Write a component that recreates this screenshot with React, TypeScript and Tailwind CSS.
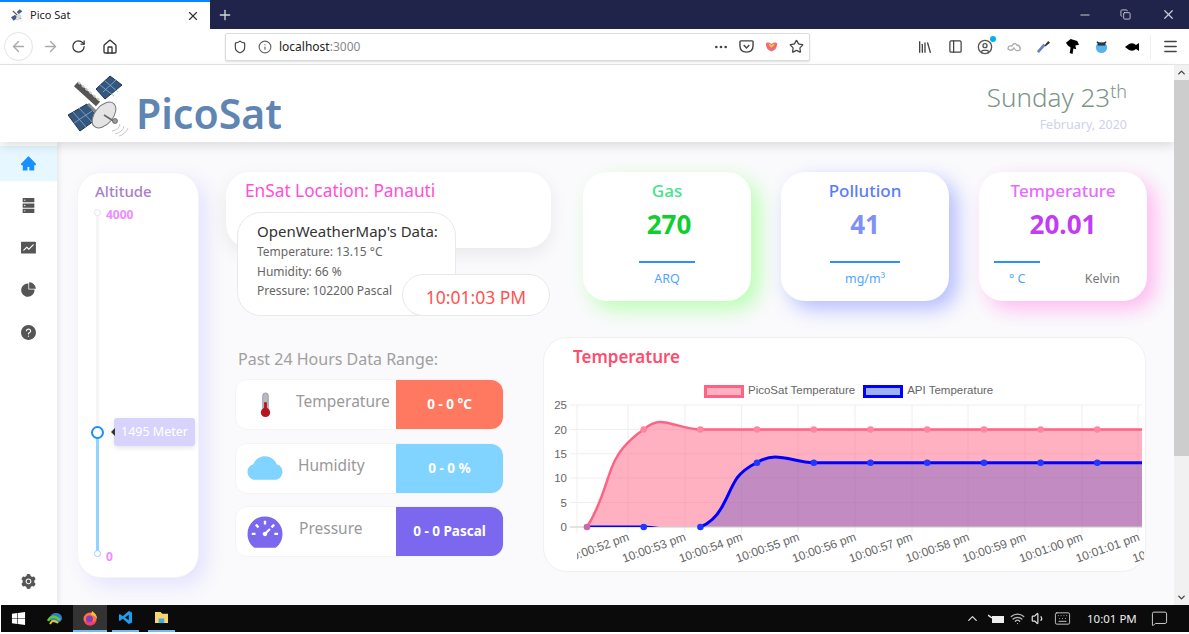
import {
  ArrowLeft,
  ArrowRight,
  RotateCw,
  Home,
  Shield,
  Info,
  MoreHorizontal,
  Star,
  Library,
  PanelLeft,
  CircleUser,
  Menu,
  Plus,
  X,
  Minus,
  Copy,
  ChevronUp,
  ChevronDown,
  Wifi,
  Volume1,
  Keyboard,
  MessageSquare,
} from "lucide-react";
import {
  AiFillHome,
  AiFillDatabase,
  AiFillFund,
  AiFillPieChart,
  AiFillQuestionCircle,
  AiFillSetting,
  AiFillCloud,
  AiFillDashboard,
} from "react-icons/ai";
import { FaWindows } from "react-icons/fa";

function Satellite({ className }: { className?: string }) {
  return (
    <svg viewBox="8 6 62 64" className={className}>
      <polygon points="36,21 50,8 62,17 45,31" fill="#33577f" stroke="#1d3550" strokeWidth="1" />
      <path d="M40,17 L54,28 M45,13 L58,24 M43,24 L56,12" stroke="#8db0d0" strokeWidth="0.8" />
      <polygon points="8,47 27,36 38,50 20,63" fill="#33577f" stroke="#1d3550" strokeWidth="1" />
      <path d="M13,44 L26,59 M19,40 L32,54 M14,55 L32,43" stroke="#8db0d0" strokeWidth="0.8" />
      <path d="M16,16 L38,36" stroke="#555" strokeWidth="6" />
      <path d="M18,14 L40,33" stroke="#c9c9c9" strokeWidth="2" strokeDasharray="3 2" />
      <path d="M28,36 L36,44" stroke="#888" strokeWidth="3" />
      <ellipse cx="44" cy="47" rx="9" ry="15" transform="rotate(40 44 47)" fill="#e4e4e4" stroke="#777" strokeWidth="1" />
      <path d="M44,47 L55,54" stroke="#666" strokeWidth="1.5" />
      <circle cx="55" cy="53" r="2.5" fill="#9a9a9a" stroke="#555" strokeWidth="0.7" />
      <path d="M52,63 Q59,62 60,56 M55,66 Q63,64 64,58 M59,68 Q66,66 68,60" fill="none" stroke="#bbb" strokeWidth="0.8" />
    </svg>
  );
}

function BrowserBar() {
  return (
    <>
      <div className="h-[29px] bg-[#20234a] flex items-stretch">
        <div className="w-[210px] bg-white border-t-2 border-[#0a84ff] flex items-center pl-[11px] pr-[10px]">
          <Satellite className="w-[13px] h-[13px]" />
          <span className="ml-[6px] text-[11px] text-[#222] flex-1">Pico Sat</span>
          <X className="w-[14px] h-[14px] text-[#333]" />
        </div>
        <div className="w-[30px] flex items-center justify-center">
          <Plus className="w-[16px] h-[16px] text-[#d5d6df]" />
        </div>
        <div className="flex-1" />
        <div className="flex items-center pr-[13px] text-[#c9cad6]">
          <Minus className="w-[14px] h-[14px]" />
          <Copy className="ml-[28px] w-[11px] h-[11px]" />
          <X className="ml-[30px] w-[15px] h-[15px]" />
        </div>
      </div>
      <div className="h-[36px] bg-white border-b border-[#e6e6e6] flex items-center relative">
        <div className="ml-[4px] w-[29px] h-[29px] rounded-full border border-[#e3e3e3] flex items-center justify-center">
          <ArrowLeft className="w-[17px] h-[17px] text-[#aaa]" />
        </div>
        <ArrowRight className="ml-[9px] w-[17px] h-[17px] text-[#aaa]" />
        <RotateCw className="ml-[12px] w-[15px] h-[15px] text-[#333]" />
        <Home className="ml-[16px] w-[16px] h-[16px] text-[#333]" />
        <div className="ml-[107px] w-[585px] h-[28px] bg-white border border-[#dcdcdc] rounded-[2px] shadow-[0_1px_2px_rgba(0,0,0,0.12)] flex items-center pl-[7px] pr-[5px]">
          <Shield className="w-[14px] h-[14px] text-[#444]" />
          <Info className="ml-[11px] w-[14px] h-[14px] text-[#666]" />
          <span className="ml-[7px] text-[12px] text-[#222]">
            localhost<span className="text-[#888]">:3000</span>
          </span>
          <div className="flex-1" />
          <MoreHorizontal className="w-[16px] h-[16px] text-[#444]" />
          <svg viewBox="0 0 16 16" className="ml-[10px] w-[15px] h-[15px]">
            <path d="M2,2 H14 Q15,2 15,3 V7 Q15,14 8,14 Q1,14 1,7 V3 Q1,2 2,2 Z M5,6.5 L8,9.5 L11,6.5" fill="none" stroke="#444" strokeWidth="1.5" />
          </svg>
          <svg viewBox="0 0 16 16" className="ml-[11px] w-[13px] h-[13px]">
            <path d="M1,4 Q4,2 8,5 Q12,2 15,4 Q15,12 8,14 Q1,12 1,4 Z" fill="#ee6a78" />
            <path d="M5,5 L8,8 L11,5" fill="none" stroke="#ffc23d" strokeWidth="2" />
          </svg>
          <Star className="ml-[11px] w-[15px] h-[15px] text-[#444]" />
        </div>
        <div className="absolute left-[917px] top-0 h-full flex items-center">
          <Library className="w-[16px] h-[16px] text-[#444]" />
          <PanelLeft className="ml-[15px] w-[15px] h-[15px] text-[#444]" />
          <div className="relative ml-[14px]">
            <CircleUser className="w-[16px] h-[16px] text-[#555]" />
            <div className="absolute -top-[3px] -right-[3px] w-[6px] h-[6px] rounded-full bg-[#00b0f0]" />
          </div>
          <svg viewBox="0 0 16 12" className="ml-[13px] w-[16px] h-[12px]">
            <path d="M2,8 Q2,4 6,5 Q8,1 11,4 Q15,5 14,9 Q10,11 8,7 Q5,11 2,8 Z" fill="none" stroke="#aaa" strokeWidth="1.3" />
          </svg>
          <svg viewBox="0 0 16 16" className="ml-[14px] w-[15px] h-[15px]">
            <path d="M2,14 L9,6" stroke="#6a7fc4" strokeWidth="3" />
            <path d="M9,7 L13,2 L15,4 L10,8 Z" fill="#333" />
          </svg>
          <svg viewBox="0 0 16 16" className="ml-[14px] w-[15px] h-[15px]">
            <path d="M1,4 L6,0 L13,2 L15,6 L11,7 L12,11 L9,10 L8,16 L5,15 L6,9 L3,7 Z" fill="#000" />
          </svg>
          <svg viewBox="0 0 16 16" className="ml-[14px] w-[15px] h-[15px]">
            <ellipse cx="8" cy="9" rx="6" ry="6" fill="#55b5e8" />
            <path d="M3,3 L6,5 M13,3 L10,5" stroke="#333" strokeWidth="1.5" />
            <rect x="4" y="4" width="8" height="3" fill="#333" />
          </svg>
          <svg viewBox="0 0 16 12" className="ml-[15px] w-[16px] h-[12px]">
            <path d="M1,6 L5,3 Q9,1 12,4 L15,2 V10 L12,8 Q9,11 5,9 Z" fill="#000" />
          </svg>
          <div className="ml-[10px] h-[24px] border-l border-[#eee]" />
          <Menu className="ml-[11px] w-[17px] h-[17px] text-[#444]" />
        </div>
      </div>
    </>
  );
}

function SideNav() {
  const items = [AiFillDatabase, AiFillFund, AiFillPieChart, AiFillQuestionCircle];
  return (
    <aside className="w-[57px] shrink-0 bg-white shadow-[2px_0_5px_rgba(0,0,0,0.08)] flex flex-col pt-[4px] pb-[15px] z-10">
      <div className="h-[35px] bg-[#e6f7ff] flex items-center justify-center">
        <AiFillHome className="w-[17px] h-[17px] text-[#1890ff]" />
      </div>
      <div className="mt-[3px] flex flex-col">
        {items.map((Icon, i) => (
          <div key={i} className="h-[42.3px] flex items-center justify-center">
            <Icon className="w-[17px] h-[17px] text-[#555]" />
          </div>
        ))}
      </div>
      <div className="mt-auto flex justify-center">
        <AiFillSetting className="w-[17px] h-[17px] text-[#555]" />
      </div>
    </aside>
  );
}

function AltitudeCard() {
  return (
    <div className="relative mt-[30px] ml-[20px] w-[122px] h-[406px] shrink-0 bg-white rounded-[24px] border border-[#f3f3f8] shadow-[8px_8px_20px_#e4e2ff]">
      <p className="pl-[17px] pt-[7px] text-[15px] font-medium text-[#a67fc9]">Altitude</p>
      <div className="absolute left-[18px] top-[40px] w-[3px] h-[340px] bg-[#f5f5f5]" />
      <div className="absolute left-[18px] top-[258px] w-[3px] h-[122px] bg-[#91d5ff]" />
      <div className="absolute left-[16px] top-[36px] w-[7px] h-[7px] rounded-full bg-white border border-[#e5e5e5]" />
      <div className="absolute left-[16px] top-[377px] w-[7px] h-[7px] rounded-full bg-white border border-[#91d5ff]" />
      <div className="absolute left-[13px] top-[253px] w-[13px] h-[13px] rounded-full bg-white border-2 border-[#1890ff]" />
      <span className="absolute left-[28px] top-[33px] text-[12px] font-bold text-[#ee8cff]">4000</span>
      <span className="absolute left-[28px] top-[375px] text-[12px] font-bold text-[#ee8cff]">0</span>
      <div className="absolute left-[36px] top-[245px] w-[81px] h-[28px] bg-[#d7d3fc] rounded-[3px] shadow-[0_2px_5px_rgba(0,0,0,0.1)] flex items-center justify-center text-[12.5px] text-white">
        1495 Meter
      </div>
      <div className="absolute left-[33px] top-[255px] w-0 h-0 border-y-[4px] border-y-transparent border-r-[4px] border-r-[#333]" />
    </div>
  );
}

function LocationBlock() {
  return (
    <div className="relative w-[325px] h-[145px] shrink-0">
      <div className="h-[76px] bg-white rounded-[24px] shadow-[0_6px_18px_rgba(0,0,0,0.07)] pl-[19px] pt-[6px] text-[17.25px] text-[#ff4fd8]">
        EnSat Location: Panauti
      </div>
      <div className="absolute left-[11px] top-[40px] w-[219px] h-[104px] bg-white rounded-[24px] border border-[#e9e9e9] pl-[19px] pt-[7px]">
        <p className="text-[15px] leading-[22px] text-[#333]">OpenWeatherMap's Data:</p>
        <p className="text-[12px] leading-[19.5px] text-[#666]">Temperature: 13.15 °C</p>
        <p className="text-[12px] leading-[19.5px] text-[#666]">Humidity: 66 %</p>
        <p className="text-[12px] leading-[19.5px] text-[#666]">Pressure: 102200 Pascal</p>
      </div>
      <div className="absolute left-[176px] top-[102px] w-[148px] h-[42px] bg-white rounded-full border border-[#e9e9e9] pt-[9px] text-center text-[17.5px] text-[#ff5252]">
        10:01:03 PM
      </div>
    </div>
  );
}

function StatCard({
  title,
  value,
  titleColor,
  valueColor,
  shadow,
  children,
}: {
  title: string;
  value: string;
  titleColor: string;
  valueColor: string;
  shadow: string;
  children: React.ReactNode;
}) {
  return (
    <div className={`w-[168px] h-[129px] shrink-0 bg-white rounded-[24px] flex flex-col items-center pt-[7px] ${shadow}`}>
      <p className={`text-[17px] leading-[24px] font-medium ${titleColor}`}>{title}</p>
      <p className={`mt-[5px] text-[26px] leading-[32px] font-bold ${valueColor}`}>{value}</p>
      {children}
    </div>
  );
}

function RangeRow({
  icon,
  label,
  value,
  labelClass,
  valueClass,
}: {
  icon: React.ReactNode;
  label: string;
  value: string;
  labelClass: string;
  valueClass: string;
}) {
  return (
    <div className="h-[51px] bg-white rounded-[12px] border border-[#f4f4f4] flex items-center">
      <div className="w-[58px] shrink-0 flex justify-center">{icon}</div>
      <span className={`flex-1 text-[15.5px] text-[#999] -mt-[5px] ${labelClass}`}>{label}</span>
      <div className={`w-[107px] h-full rounded-r-[12px] flex items-center justify-center text-[13.5px] font-bold text-white ${valueClass}`}>
        {value}
      </div>
    </div>
  );
}

function TemperatureChart() {
  const points = [587, 643.7, 700.4, 757, 813.8, 870.5, 927.2, 984, 1040.6, 1097.3];
  const grid = [577, 628, 685, 741.5, 798, 855, 912, 968, 1025, 1082, 1138];
  const ticks = [
    { y: 405, l: "25" },
    { y: 429.5, l: "20" },
    { y: 453.8, l: "15" },
    { y: 478, l: "10" },
    { y: 502.5, l: "5" },
    { y: 527, l: "0" },
  ];
  const times = [
    "10:00:52 pm",
    "10:00:53 pm",
    "10:00:54 pm",
    "10:00:55 pm",
    "10:00:56 pm",
    "10:00:57 pm",
    "10:00:58 pm",
    "10:00:59 pm",
    "10:01:00 pm",
    "10:01:01 pm",
    "10:01:02 pm",
  ];
  const pinkLine =
    "M587,527 C598,510 604,490 608,478 C612,465 617,455 623,448 C629,441 637,434 643.7,429.5 C650,424 655,422 660,422 C672,422 685,429.5 700.4,429.5 L1142,429.5";
  const blueLine =
    "M700.4,527 C710,523 718,515 723,505 C729,494 731,487 737,478 C743,470 750,466 757,462.5 C763,459 769,457 775,457 C788,457 800,462.7 813.8,462.7 L1142,462.7";
  return (
    <svg viewBox="544 395 601 172" className="block w-[601px] h-[172px] -mt-[3px]" style={{ fontFamily: "'Liberation Sans', sans-serif" }}>
      <defs>
        <clipPath id="plot">
          <rect x="577" y="405" width="565" height="122" />
        </clipPath>
        <clipPath id="labels">
          <rect x="577" y="527" width="567" height="40" />
        </clipPath>
      </defs>
      {ticks.map((t) => (
        <g key={t.l}>
          <line x1="570" x2="1142" y1={t.y} y2={t.y} stroke="#eeeeee" strokeWidth="1" />
          <text x="567" y={t.y + 4} textAnchor="end" fontSize="11.5" fill="#666">
            {t.l}
          </text>
        </g>
      ))}
      {grid.map((x) => (
        <line key={x} x1={x} x2={x} y1="405" y2="533" stroke="#eeeeee" strokeWidth="1" />
      ))}
      <g clipPath="url(#plot)">
        <path d={`${pinkLine} L1142,527 Z`} fill="rgba(255,99,132,0.5)" />
        <path d={`${blueLine} L1142,527 Z`} fill="rgba(102,82,193,0.4)" />
      </g>
      <line x1="570" x2="1142" y1="527" y2="527" stroke="#cfcfcf" strokeWidth="1" />
      <path d={pinkLine} fill="none" stroke="#ff6384" strokeWidth="2.5" />
      {points.slice(1).map((x) => (
        <circle key={x} cx={x} cy="429.5" r="3.3" fill="#ff86a0" />
      ))}
      <path d="M587,527 L643.7,527 C652,527 658,528 666,530" fill="none" stroke="#0000ff" strokeWidth="3" clipPath="url(#plot)" />
      <path d={blueLine} fill="none" stroke="#0000ff" strokeWidth="3" />
      <circle cx="587" cy="527" r="3.3" fill="#c56aa8" />
      {[643.7, 700.4].map((x) => (
        <circle key={x} cx={x} cy="527" r="3.3" fill="#2038ff" />
      ))}
      {points.slice(3).map((x) => (
        <circle key={x} cx={x} cy="462.7" r="3.3" fill="#2038ff" />
      ))}
      <g clipPath="url(#labels)">
        {times.map((t, i) => {
          const x = 630 + 56.7 * i;
          return (
            <text key={t} x={x} y="540" textAnchor="end" fontSize="12" fill="#666" transform={`rotate(-20 ${x} 540)`}>
              {t}
            </text>
          );
        })}
      </g>
    </svg>
  );
}

function Taskbar() {
  return (
    <div className="h-[29px] shrink-0 bg-white pl-px pb-[2px]">
      <div className="h-full bg-[#0b0b0b] flex items-stretch relative">
        <div className="w-[35px] flex items-center justify-center">
          <FaWindows className="w-[15px] h-[15px] text-white" />
        </div>
        <div className="w-[37px] flex items-center justify-center">
          <svg viewBox="0 0 16 14" className="w-[16px] h-[14px]">
            <ellipse cx="9" cy="6" rx="6" ry="5" fill="#2f80c8" />
            <path d="M1,9 Q5,1 13,8" fill="none" stroke="#5cc83a" strokeWidth="2.5" />
            <path d="M3,12 Q6,6 11,11" fill="none" stroke="#f0c020" strokeWidth="2" />
          </svg>
        </div>
        <div className="w-[34px] bg-[#333] border-b-2 border-[#76b9ed] flex items-center justify-center">
          <svg viewBox="0 0 16 16" className="w-[16px] h-[16px]">
            <circle cx="8" cy="9" r="6.5" fill="#ff7139" />
            <circle cx="7.5" cy="9" r="3.5" fill="#7b3fc4" />
            <path d="M10,1 Q15,4 15,9 Q13,5 9,5 Z" fill="#ffbd3d" />
            <path d="M2,11 Q4,16 10,15 Q14,14 14.5,10 Q11,13 7,12 Z" fill="#f23d6d" />
          </svg>
        </div>
        <div className="ml-[5px] w-[27px] border-b-2 border-[#76b9ed] flex items-center justify-center">
          <svg viewBox="0 0 16 16" className="w-[15px] h-[15px]">
            <path d="M11.5,1 L15,2.7 V13.3 L11.5,15 L5,9.4 L2,11.8 L1,11 V5 L2,4.2 L5,6.6 Z M11.5,5 L7.5,8 L11.5,11 Z" fill="#1f9cf0" fillRule="evenodd" />
          </svg>
        </div>
        <div className="ml-[9px] w-[27px] border-b-2 border-[#76b9ed] flex items-center justify-center">
          <svg viewBox="0 0 16 14" className="w-[15px] h-[13px]">
            <path d="M1,1 H7 L9,3 H15 V13 H1 Z" fill="#f5d76e" />
            <rect x="5" y="8" width="6" height="5" fill="#4aa8e0" />
          </svg>
        </div>
        <div className="absolute left-[964px] top-0 h-full flex items-center text-[#ddd]">
          <ChevronUp className="w-[15px] h-[15px]" />
          <svg viewBox="0 0 16 10" className="ml-[8px] w-[16px] h-[10px]">
            <rect x="4" y="2" width="12" height="7" fill="#eee" />
            <path d="M0,1 L4,4" stroke="#eee" strokeWidth="1.5" />
          </svg>
          <Wifi className="ml-[6px] w-[15px] h-[15px] text-[#bbb]" />
          <Volume1 className="ml-[6px] w-[15px] h-[15px]" />
          <Keyboard className="ml-[6px] w-[21px] h-[17px]" strokeWidth={1.2} />
          <span className="ml-[14px] text-[11.5px] text-[#eee]">10:01 PM</span>
          <MessageSquare className="ml-[14px] w-[17px] h-[17px]" strokeWidth={1.3} />
        </div>
      </div>
    </div>
  );
}

export default function App() {
  return (
    <div className="w-[1189px] h-[634px] overflow-hidden flex flex-col bg-white" style={{ fontFamily: "'Noto Sans', sans-serif" }}>
      <BrowserBar />

      <div className="flex-1 min-h-0 flex">
        <div className="flex-1 min-w-0 flex flex-col">
          {/* Header */}
          <header className="h-[77px] shrink-0 bg-white shadow-[0_4px_10px_rgba(0,0,0,0.12)] z-20 flex items-start pl-[68px] pr-[47px]">
            <Satellite className="mt-[9px] w-[62px] h-[64px]" />
            <span className="mt-[19px] ml-[6px] text-[41px] leading-[58px] font-semibold text-[#5f86b3]">PicoSat</span>
            <div className="ml-auto flex flex-col items-end pt-[13px]">
              <p className="text-[26px] leading-[38px] font-light text-[#7d9589]">
                Sunday 23<sup className="text-[18px]">th</sup>
              </p>
              <p className="mt-[1px] text-[12.5px] leading-[16px] text-[#cfd2ea]">February, 2020</p>
            </div>
          </header>

          {/* Body */}
          <div className="flex-1 min-h-0 flex bg-[#fafafc]">
            <SideNav />
            <AltitudeCard />

            <div className="ml-[27px] flex flex-col pt-[30px]">
              <div className="flex items-start">
                <LocationBlock />
                <div className="ml-[32px] flex gap-[30px]">
                  <StatCard
                    title="Gas"
                    value="270"
                    titleColor="text-[#3fe58a]"
                    valueColor="text-[#0fce32] ml-[4px]"
                    shadow="shadow-[8px_8px_20px_#b8ffb0]"
                  >
                    <div className="mt-[21px] w-[56px] h-[2px] bg-[#2a92ff]" />
                    <p className="mt-[7px] text-[12.5px] text-[#52a5ff]">ARQ</p>
                  </StatCard>
                  <StatCard
                    title="Pollution"
                    value="41"
                    titleColor="text-[#5b7bff]"
                    valueColor="text-[#8090f5]"
                    shadow="shadow-[8px_8px_20px_#b4bcff]"
                  >
                    <div className="mt-[21px] w-[70px] h-[2px] bg-[#2a92ff]" />
                    <p className="mt-[7px] text-[12.5px] text-[#52a5ff]">mg/m³</p>
                  </StatCard>
                  <StatCard
                    title="Temperature"
                    value="20.01"
                    titleColor="text-[#e66bff]"
                    valueColor="text-[#c23cf5]"
                    shadow="shadow-[8px_8px_20px_#ffb8f2]"
                  >
                    <div className="mt-[21px] self-start ml-[15px] w-[46px] h-[2px] bg-[#2a92ff]" />
                    <div className="mt-[7px] w-full flex justify-between pl-[30px] pr-[27px] text-[12.5px]">
                      <span className="text-[#52a5ff]">° C</span>
                      <span className="text-[#777]">Kelvin</span>
                    </div>
                  </StatCard>
                </div>
              </div>

              <div className="mt-[20px] flex items-start">
                <div className="ml-[9px] w-[269px] shrink-0 pt-[10px]">
                  <p className="ml-[3px] text-[16px] leading-[24px] text-[#a0a0a0]">Past 24 Hours Data Range:</p>
                  <div className="mt-[8px] flex flex-col gap-[12.5px]">
                    <RangeRow
                      icon={
                        <svg viewBox="0 0 16 28" className="w-[15px] h-[26px]">
                          <rect x="5" y="1" width="6" height="20" rx="3" fill="#b9b9c4" stroke="#8c8c98" strokeWidth="0.8" />
                          <rect x="6.5" y="11" width="3" height="10" fill="#b8141c" />
                          <circle cx="8" cy="22" r="5" fill="#b8141c" />
                        </svg>
                      }
                      label="Temperature"
                      value="0 - 0 °C"
                      labelClass="ml-[2px]"
                      valueClass="bg-[#ff7961]"
                    />
                    <RangeRow
                      icon={<AiFillCloud className="w-[40px] h-[40px] text-[#80d4ff]" />}
                      label="Humidity"
                      value="0 - 0 %"
                      labelClass="ml-[4px]"
                      valueClass="bg-[#80d4ff]"
                    />
                    <RangeRow
                      icon={<AiFillDashboard className="w-[40px] h-[40px] text-[#7b68ee]" />}
                      label="Pressure"
                      value="0 - 0 Pascal"
                      labelClass="ml-[5px]"
                      valueClass="bg-[#7b68ee]"
                    />
                  </div>
                </div>

                <div className="ml-[39px] w-[603px] h-[235px] shrink-0 bg-white rounded-[24px] border border-[#f0f0f0]">
                  <p className="pl-[29px] pt-[7px] text-[17px] leading-[24px] font-semibold text-[#ff4d6d]">Temperature</p>
                  <div
                    className="mt-[15px] h-[14px] flex items-center pl-[160px] text-[11.5px] text-[#666]"
                    style={{ fontFamily: "'Liberation Sans', sans-serif" }}
                  >
                    <div className="w-[40px] h-[13px] bg-[#ffb1c1] border-[3px] border-[#ff6384]" />
                    <span className="ml-[4px]">PicoSat Temperature</span>
                    <div className="ml-[8px] w-[40px] h-[13px] bg-[#9db2f5] border-[3px] border-[#0000ff]" />
                    <span className="ml-[4px]">API Temperature</span>
                  </div>
                  <TemperatureChart />
                </div>
              </div>
            </div>
          </div>
        </div>

        {/* Scrollbar */}
        <div className="w-[15px] shrink-0 bg-[#f1f1f1] flex flex-col z-30">
          <div className="h-[15px] flex items-center justify-center">
            <ChevronUp className="w-[11px] h-[11px] text-[#444]" strokeWidth={3} />
          </div>
          <div className="h-[376px] bg-[#cdcdcd]" />
          <div className="mt-auto h-[15px] flex items-center justify-center">
            <ChevronDown className="w-[11px] h-[11px] text-[#444]" strokeWidth={3} />
          </div>
        </div>
      </div>

      <Taskbar />
    </div>
  );
}
